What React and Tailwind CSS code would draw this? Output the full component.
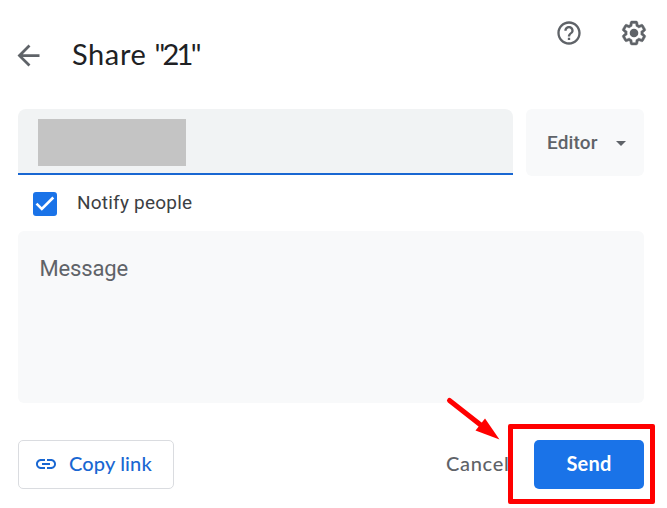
import React from "react";
import { MdArrowBack, MdHelpOutline, MdLink } from "react-icons/md";

function GearIcon() {
  return (
    <svg viewBox="0 0 24 24" className="h-[28px] w-[28px]" fill="currentColor">
      <path
        stroke="currentColor"
        strokeWidth="0.4"
        d="M13.85 22.25h-3.7c-.74 0-1.36-.54-1.45-1.27l-.27-1.89c-.27-.14-.53-.29-.79-.46l-1.8.72c-.7.26-1.47-.03-1.81-.65L2.2 15.53c-.35-.66-.2-1.44.36-1.88l1.53-1.19c-.01-.15-.02-.3-.02-.46 0-.15.01-.31.02-.46l-1.52-1.19c-.59-.45-.74-1.26-.37-1.88l1.85-3.19c.34-.62 1.11-.9 1.79-.63l1.81.73c.26-.17.52-.32.78-.46l.27-1.91c.09-.7.71-1.25 1.44-1.25h3.7c.74 0 1.36.54 1.45 1.27l.27 1.89c.27.14.53.29.79.46l1.8-.72c.71-.26 1.48.03 1.82.65l1.84 3.18c.36.66.2 1.44-.36 1.88l-1.52 1.19c.01.15.02.3.02.46s-.01.31-.02.46l1.52 1.19c.56.45.72 1.23.37 1.86l-1.86 3.22c-.34.62-1.11.9-1.8.63l-1.8-.72c-.26.17-.52.32-.78.46l-.27 1.91c-.1.68-.72 1.22-1.46 1.22zm-3.23-2h2.76l.37-2.55.53-.22c.44-.18.88-.44 1.34-.78l.45-.34 2.38.96 1.38-2.4-2.03-1.58.07-.56c.03-.26.06-.51.06-.78s-.03-.53-.06-.78l-.07-.56 2.03-1.58-1.39-2.4-2.39.96-.45-.35c-.42-.32-.87-.58-1.33-.77l-.52-.22-.37-2.55h-2.76l-.37 2.55-.53.21c-.44.19-.88.44-1.34.79l-.45.33-2.38-.95-1.39 2.39 2.03 1.58-.07.56a7 7 0 0 0-.06.79c0 .26.02.53.06.78l.07.56-2.03 1.58 1.38 2.4 2.39-.96.45.35c.43.33.86.58 1.33.77l.53.22.38 2.55z"
      />
      <circle cx="12" cy="12" r="3.7" />
    </svg>
  );
}

export default function App() {
  return (
    <div className="relative flex h-[508px] w-[667px] flex-col overflow-hidden bg-white pr-[23px] pl-[18px] font-['Roboto',sans-serif] text-[#5f6368]">
      <header className="flex h-[109px] shrink-0 items-start justify-between">
        <div className="flex items-center pt-[35px]">
          <MdArrowBack className="-ml-[6px] h-[33px] w-[33px]" />
          <h1 className="ml-[27px] h-[40px] font-['Lato',sans-serif] text-[29px] leading-[38px] tracking-[0.6px] whitespace-nowrap text-[#202124]">
            Share <span className="tracking-[-2.7px]">"21"</span>
          </h1>
        </div>
        <div className="-mr-[3.5px] flex items-center gap-[37px] pt-[18.5px]">
          <MdHelpOutline className="h-[28px] w-[28px]" />
          <GearIcon />
        </div>
      </header>

      <div className="flex h-[67px] shrink-0 gap-[13px]">
        <div className="flex h-[66px] w-[495px] items-start rounded-t-lg border-b-2 border-[#1967d2] bg-[#f1f3f4] pt-[10px] pl-[20px]">
          <div className="h-[47px] w-[148px] bg-[#c4c4c4]" />
        </div>
        <button className="flex h-[67px] w-[118px] items-center rounded-md bg-[#f8f9fa] pl-[21px] text-[19px] font-medium">
          <span className="mt-[2px] w-[69px] text-left tracking-[0.15px]">Editor</span>
          <span className="mt-[2px] border-x-[5px] border-t-[5px] border-x-transparent border-t-[#5f6368]" />
        </button>
      </div>

      <label className="flex h-[55px] shrink-0 items-center pl-[15px]">
        <span className="flex h-[24px] w-[24px] items-center justify-center rounded-[3px] bg-[#1a73e8]">
          <svg viewBox="0 0 24 24" className="h-[24px] w-[24px]" fill="none" stroke="white" strokeWidth="2.6">
            <path d="M3.5 11.7 8.8 17 20.3 5.5" />
          </svg>
        </span>
        <span className="-mt-[2px] ml-[20px] text-[19px] leading-[28px] tracking-[0.22px] text-[#3c4043]">Notify people</span>
      </label>

      <div className="h-[172px] shrink-0 rounded-md bg-[#f8f9fa] pt-[22px] pl-[21.5px] text-[22px] leading-[32px] tracking-[-0.15px]">Message</div>

      <footer className="mt-[37px] flex h-[49px] shrink-0 items-center justify-between font-['Lato',sans-serif] text-[20px]">
        <button className="flex h-[49px] w-[156px] items-center rounded-[5px] border border-[#dadce0] pl-[15px] font-medium text-[#1967d2]">
          <MdLink className="-mt-[1px] h-[24px] w-[24px]" />
          <span className="-mt-[3px] ml-[11px] tracking-[0.15px] whitespace-nowrap">Copy link</span>
        </button>
        <div className="flex items-center">
          <button className="h-[49px] w-[88px] pb-[3px] text-left font-medium tracking-[0.7px]">Cancel</button>
          <button className="h-[49px] w-[110px] rounded-[5px] bg-[#1a73e8] pb-[3px] font-bold tracking-[0.2px] text-white">Send</button>
        </div>
      </footer>

      <div className="pointer-events-none absolute top-[424px] left-[508px] h-[80px] w-[147px] rounded-[2px] border-[5px] border-[#ff0000]" />
      <svg className="pointer-events-none absolute top-[390px] left-[440px] h-[60px] w-[70px]" viewBox="440 390 70 60">
        <path d="M449.5 400.5 482 426" stroke="#ff0000" strokeWidth="5" strokeLinecap="round" />
        <path d="M485 418.5 499.5 439.5 475.5 430.5z" fill="#ff0000" />
      </svg>
    </div>
  );
}
